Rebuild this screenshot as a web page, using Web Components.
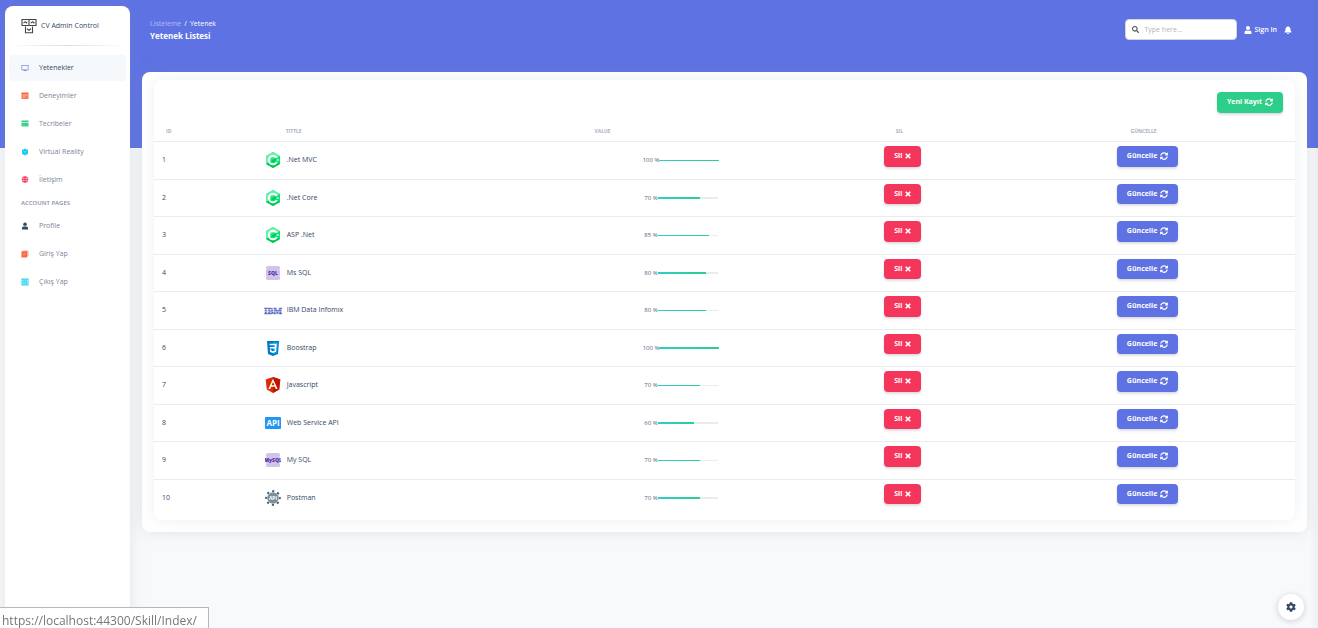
<!DOCTYPE html>
<html lang="tr">
<head>
<meta charset="utf-8">
<meta name="viewport" content="width=device-width, initial-scale=1">
<title>CV Admin Control</title>
<style>
  body { margin: 0; background: #f8f9fa; color: #525f7f; font: 7px/10px "Open Sans", "Noto Sans", sans-serif; }
</style>
</head>
<body>
<cv-shell>
  <cv-sidebar slot="sidebar">
    <cv-nav-item icon="screen" active>Yetenekler</cv-nav-item>
    <cv-nav-item icon="calendar">Deneyimler</cv-nav-item>
    <cv-nav-item icon="card">Tecribeler</cv-nav-item>
    <cv-nav-item icon="cube">Virtual Reality</cv-nav-item>
    <cv-nav-item icon="globe">İletişim</cv-nav-item>
    <cv-nav-item slot="account" icon="person">Profile</cv-nav-item>
    <cv-nav-item slot="account" icon="copy">Giriş Yap</cv-nav-item>
    <cv-nav-item slot="account" icon="collection">Çıkış Yap</cv-nav-item>
  </cv-sidebar>
  <cv-navbar slot="navbar"></cv-navbar>
  <cv-card><cv-skill-table></cv-skill-table></cv-card>
</cv-shell>
<cv-settings></cv-settings>
<cv-status>https://localhost:44300/Skill/Index/</cv-status>

<script>
const csharp = `<svg viewBox="0 0 16 16"><path d="M8 0l7 4v8l-7 4-7-4V4z" fill="#00e676"/><path d="M1 4l7-4 7 4-7 4-7 4z" fill="#69f0ae"/><path d="M1 12l3-1.500 4 2 4-2 3 1.500-7 4z" fill="#00c853"/><circle cx="8" cy="8" r="4.200" fill="none" stroke="#fff" stroke-width="1.900"/><path d="M8 8l7-3.500v6L9 9.500z" fill="#00e676"/><circle cx="8" cy="8" r="2.200" fill="#2fdc80"/><path d="M6 9l5-3 1 1.500L8 10.200z" fill="#00c853"/><path d="M11.500 7h2.500v2h-2.500z" fill="#8af5b8"/></svg>`;
const dbIcon = label => `<svg viewBox="0 0 16 16"><path d="M1 2.500Q1 1 3 1h10q2 0 2 1.500V4l-1 .5 1 .5v6l-1 .5 1 .5v1.500q0 1.500-2 1.500H3q-2 0-2-1.500V12l1-.5-1-.5V5l1-.5L1 4z" fill="#d1c4e9"/><text x="8" y="10" font-size="5" font-weight="800" text-anchor="middle" fill="#512da8">${label}</text></svg>`;

const ICONS = {
  logo: `<svg viewBox="0 0 16 16" fill="none" stroke="#444" stroke-width="1.100"><path d="M1 1.500h7v6H1zM8 1.500h7v6H8zM4.500 8.500v6.200h7V8.500"/><path d="M2.500 5.200l1.800-1.500L6.200 5.200M9.800 5.200l1.800-1.500 1.900 1.500M6 10.800l2 1.500 2-1.500" stroke-width="1.100"/></svg>`,
  screen: `<svg viewBox="0 0 16 16" fill="#5e72e4"><path d="M1 2h14v10.500h-4.500L11.500 14h-7l1-1.500H1zM2.500 3.500V11h11V3.500z" fill-rule="evenodd" opacity=".8"/></svg>`,
  calendar: `<svg viewBox="0 0 16 16"><path d="M1 1h14v3.500H1z" fill="#fb6340"/><path d="M1 4h14v10H1z" fill="#fb7a5c"/><path d="M3 6h10M3.500 10h5" stroke="#fdd" stroke-width="1.200"/></svg>`,
  card: `<svg viewBox="0 0 16 16"><path d="M1 1h14v3.500H1z" fill="#2dce89"/><path d="M1 6h14v7H1z" fill="#2dce89"/><path d="M1 4.500h14V6H1z" fill="#b4ecd3"/><path d="M3 10h5M10 10h3" stroke="#b4ecd3"/></svg>`,
  cube: `<svg viewBox="0 0 16 16"><path d="M8 1l6 3v7.500L8 15l-6-3.500V4z" fill="#11cdef"/><path d="M3 5l5 2.500L13 5M8 7.500V14" stroke="#6fe3f7" fill="none"/></svg>`,
  globe: `<svg viewBox="0 0 16 16"><circle cx="8" cy="7" r="6.500" fill="#f5365c"/><path d="M1.500 5h13M1.500 9h13" stroke="#fcc" fill="none" stroke-width="1.100"/><path d="M5 1.500Q3.500 7 5 12.500M11 1.500Q12.500 7 11 12.500" stroke="#fcc" fill="none" stroke-width=".8"/></svg>`,
  person: `<svg viewBox="0 0 16 16" fill="#344767"><circle cx="8" cy="4.500" r="3.500"/><path d="M2 15v-3q0-2.500 3-2.800h6q3 .3 3 2.800v3z"/></svg>`,
  copy: `<svg viewBox="0 0 16 16"><path d="M4 1h11v12H4z" fill="#fcb09f"/><path d="M1 2.500h11V15H1z" fill="#fb6340"/><path d="M4 6.500h5.500M4 9h5.500M4 11.500h3.500" stroke="#fba48f" stroke-width="1"/></svg>`,
  collection: `<svg viewBox="0 0 16 16"><path d="M1 1h14v14H1z" fill="#11cdef" opacity=".9"/><path d="M4 4h9v8H4z" fill="none" stroke="#d8f7fc" stroke-width="1.200"/><circle cx="8.500" cy="8" r="1.300" fill="#d8f7fc"/><path d="M0 5h2M0 11h2" stroke="#fff"/></svg>`,
  search: `<svg viewBox="0 0 512 512" fill="currentColor"><path d="M505 442.700L405.300 343c-4.500-4.500-10.600-7-17-7H372c27.600-35.300 44-79.700 44-128C416 93.100 322.900 0 208 0S0 93.100 0 208s93.100 208 208 208c48.300 0 92.700-16.400 128-44v16.300c0 6.400 2.500 12.500 7 17l99.700 99.700c9.400 9.400 24.600 9.400 33.900 0l28.300-28.300c9.400-9.400 9.400-24.600.1-34zM208 336c-70.700 0-128-57.200-128-128 0-70.700 57.200-128 128-128 70.700 0 128 57.200 128 128 0 70.700-57.200 128-128 128z"/></svg>`,
  user: `<svg viewBox="0 0 448 512" fill="currentColor"><path d="M224 256c70.700 0 128-57.300 128-128S294.700 0 224 0 96 57.300 96 128s57.300 128 128 128zm89.600 32h-16.700c-22.200 10.200-46.900 16-72.900 16s-50.600-5.800-72.900-16h-16.700C60.200 288 0 348.200 0 422.400V464c0 26.500 21.500 48 48 48h352c26.500 0 48-21.500 48-48v-41.600c0-74.200-60.200-134.400-134.400-134.400z"/></svg>`,
  bell: `<svg viewBox="0 0 448 512" fill="currentColor"><path d="M224 512c35.300 0 64-28.700 64-64H160c0 35.300 28.700 64 64 64zm215.400-149.700c-19.300-20.800-55.500-52-55.500-154.300 0-77.700-54.500-139.900-127.900-155.200V32c0-17.700-14.300-32-32-32s-32 14.300-32 32v20.800C118.600 68.100 64.100 130.300 64.100 208c0 102.300-36.200 133.500-55.500 154.300-6 6.400-8.700 14.200-8.600 21.700.1 16.400 13 32 32.100 32h383.800c19.100 0 32-15.600 32.100-32 .1-7.500-2.600-15.300-8.600-21.700z"/></svg>`,
  sync: `<svg viewBox="0 0 512 512" fill="currentColor"><path d="M370.720 133.280C339.458 104.008 298.888 87.962 255.848 88c-77.458.068-144.328 53.178-162.791 126.850-1.344 5.363-6.122 9.150-11.651 9.150H24.103c-7.498 0-13.194-6.807-11.807-14.176C33.933 94.924 134.813 8 256 8c66.448 0 126.791 26.136 171.315 68.685L463.030 40.970C478.149 25.851 504 36.559 504 57.941V192c0 13.255-10.745 24-24 24H345.941c-21.382 0-32.090-25.851-16.971-40.971l41.750-41.749zM32 296h134.059c21.382 0 32.090 25.851 16.971 40.971l-41.750 41.750c31.262 29.273 71.835 45.319 114.876 45.280 77.418-.07 144.315-53.144 162.787-126.849 1.344-5.363 6.122-9.150 11.651-9.150h57.304c7.498 0 13.194 6.807 11.807 14.176C478.067 417.076 377.187 504 256 504c-66.448 0-126.791-26.136-171.315-68.685L48.970 471.030C33.851 486.149 8 475.441 8 454.059V320c0-13.255 10.745-24 24-24z"/></svg>`,
  times: `<svg viewBox="0 0 16 16"><path d="M2 2l12 12M14 2L2 14" stroke="currentColor" stroke-width="4.500"/></svg>`,
  cog: `<svg viewBox="0 0 512 512" fill="#344767"><path d="M487.400 315.700l-42.600-24.600c4.300-23.200 4.300-47 0-70.200l42.600-24.600c4.900-2.800 7.100-8.600 5.500-14-11.100-35.600-30-67.800-54.700-94.600-3.800-4.100-10-5.100-14.800-2.300L380.800 110c-17.900-15.400-38.500-27.300-60.800-35.100V25.800c0-5.600-3.900-10.500-9.400-11.700-36.700-8.200-74.300-7.800-109.200 0-5.500 1.200-9.400 6.100-9.400 11.700V75c-22.200 7.900-42.800 19.800-60.800 35.100L88.700 85.500c-4.900-2.800-11-1.900-14.800 2.300-24.700 26.700-43.600 58.900-54.700 94.600-1.700 5.400.6 11.200 5.500 14L67.300 221c-4.300 23.200-4.300 47 0 70.200l-42.600 24.600c-4.900 2.800-7.100 8.600-5.500 14 11.100 35.600 30 67.800 54.700 94.600 3.800 4.100 10 5.100 14.800 2.300l42.600-24.600c17.900 15.400 38.500 27.300 60.800 35.100v49.200c0 5.600 3.900 10.500 9.400 11.700 36.700 8.200 74.300 7.800 109.200 0 5.500-1.200 9.400-6.100 9.400-11.700v-49.200c22.200-7.900 42.800-19.800 60.800-35.100l42.600 24.600c4.900 2.800 11 1.900 14.800-2.300 24.700-26.700 43.600-58.900 54.700-94.600 1.500-5.500-.7-11.300-5.600-14.100zM256 336c-44.100 0-80-35.900-80-80s35.900-80 80-80 80 35.900 80 80-35.900 80-80 80z"/></svg>`,
  csharp,
  sql: dbIcon("SQL"),
  mysql: dbIcon("MySQL"),
  ibm: `<svg viewBox="0 0 16 16" overflow="visible"><text x="8" y="12" font-family="Liberation Serif" font-size="9" font-weight="700" text-anchor="middle" fill="#5c6bc0" stroke="#5c6bc0" stroke-width=".5">IBM</text><path d="M-2 7.500h20M-2 9.500h20" stroke="#fff" stroke-width=".4"/></svg>`,
  css: `<svg viewBox="0 0 16 16"><path d="M2 1h12l-1 13-5 2-5-2z" fill="#0277bd"/><path d="M8 2h5l-.9 11L8 14.800z" fill="#039be5"/><path d="M4.500 3.800h7.300l-.7 8L8 13l-3-1.100-.2-2.400h1.600l.1 1.200 1.500.6 1.600-.6.200-2.200H4.800V7h4.900l.2-1.700H4.700z" fill="#fff"/></svg>`,
  angular: `<svg viewBox="0 0 16 16"><path d="M8 0l7.300 2.600-1.100 10L8 16l-6.200-3.400-1.100-10z" fill="#dd2c00"/><path d="M8 0l7.300 2.600-1.100 10L8 16z" fill="#bf1600"/><path d="M8 1.800L3.400 12h1.800l.9-2.300h3.800l.9 2.300h1.800zm0 3.300l1.400 3.200H6.600z" fill="#fff"/></svg>`,
  api: `<svg viewBox="0 0 16 16"><rect y="2" width="16" height="12" rx="1" fill="#2196f3"/><text x="8" y="11" font-size="8" font-weight="700" text-anchor="middle" fill="#fff">API</text></svg>`,
  gear: `<svg viewBox="0 0 16 16"><circle cx="8" cy="8" r="6.900" fill="none" stroke="#455a64" stroke-width="1.800" stroke-dasharray="2.200 3.219" stroke-dashoffset="1.100"/><circle cx="8" cy="8" r="5.800" fill="#78909c"/><text x="8" y="10" font-size="5" font-weight="700" text-anchor="middle" fill="#fff">API</text></svg>`
};

function define(name, markup, setup) {
  const template = document.createElement("template");
  template.innerHTML = markup;
  customElements.define(name, class extends HTMLElement {
    constructor() {
      super();
      this.attachShadow({ mode: "open" }).append(template.content.cloneNode(true));
    }
    connectedCallback() { if (setup) setup(this, this.shadowRoot); }
  });
}

define("cv-icon", `
  <style>
    :host { display: block; flex: none; width: var(--icon-size, 8px); height: var(--icon-size, 8px); }
    div { height: 100%; }
    svg { display: block; width: 100%; height: 100%; }
  </style><div></div>`,
  (host, root) => {
    root.querySelector("div").innerHTML = ICONS[host.getAttribute("name")] || "";
  });

define("cv-shell", `
  <style>
    :host { display: flex; min-height: 100vh; box-sizing: border-box; padding: 6px 11px 0 5px; gap: 12px;
      background: linear-gradient(270deg, rgba(60,70,90,.06), transparent 8px), linear-gradient(#5e72e4, #5e72e4) 0 0 / 100% 148px no-repeat;
      overflow: hidden; }
    aside { display: flex; flex: none; width: 125px; }
    main { flex: 1; min-width: 0; }
  </style>
  <aside><slot name="sidebar"></slot></aside>
  <main><slot name="navbar"></slot><slot></slot></main>`);

define("cv-sidebar", `
  <style>
    :host { display: block; flex: 1; box-sizing: border-box; padding: 0 4px; background: #fff; border-radius: 8px 8px 0 0;
      box-shadow: 0 0 16px rgba(136,152,170,.2); }
    .brand { display: flex; align-items: center; gap: 4px; height: 39px; padding-left: 12px; color: #344767; text-decoration: none; }
    .brand cv-icon { --icon-size: 16px; }
    hr { height: 1px; margin: 0 0 9px; border: 0; background: linear-gradient(90deg, transparent, #ddd, transparent); }
    nav { display: grid; gap: 2px; }
    h6 { margin: 5px 0 5px 12px; font-size: 6px; line-height: 10px; font-weight: 600; color: #8590a5; }
  </style>
  <a class="brand" href="#"><cv-icon name="logo"></cv-icon><span>CV Admin Control</span></a>
  <hr>
  <nav><slot></slot></nav>
  <h6>ACCOUNT PAGES</h6>
  <nav><slot name="account"></slot></nav>`);

define("cv-nav-item", `
  <style>
    :host { display: block; }
    a { display: flex; align-items: center; gap: 10px; height: 26px; padding-left: 12px; border-radius: 4px;
      color: #7b8499; text-decoration: none; }
    :host([active]) a { background: #f6f9fc; color: #344767; }
  </style>
  <a href="#"><slot></slot></a>`,
  (host, root) => {
    const icon = document.createElement("cv-icon");
    icon.setAttribute("name", host.getAttribute("icon"));
    root.querySelector("a").prepend(icon);
  });

define("cv-navbar", `
  <style>
    :host { display: flex; justify-content: space-between; align-items: flex-start; height: 66px; padding: 0 15px 0 8px;
      box-sizing: border-box; color: #fff; }
    a { color: inherit; text-decoration: none; }
    .trail { padding-top: 13px; }
    ol { display: flex; gap: 3px; margin: 0; padding: 0; list-style: none; }
    li:first-child { opacity: .5; }
    h1 { margin: 1px 0 0; font-size: 8px; line-height: 11px; font-weight: 700; }
    .tools { display: flex; align-items: center; gap: 7px; padding-top: 13px; }
    .sign { display: flex; align-items: center; gap: 2px; font-weight: 600; }
    .tools a cv-icon { --icon-size: 8px; }
  </style>
  <div class="trail">
    <ol><li><a href="#">Listeleme</a></li><li>/</li><li>Yetenek</li></ol>
    <h1>Yetenek Listesi</h1>
  </div>
  <div class="tools">
    <cv-search></cv-search>
    <a class="sign" href="#"><cv-icon name="user"></cv-icon><span>Sign In</span></a>
    <a href="#" aria-label="Notifications"><cv-icon name="bell"></cv-icon></a>
  </div>`);

define("cv-search", `
  <style>
    :host { display: block; }
    label { display: flex; align-items: center; gap: 5px; box-sizing: border-box; width: 112px; height: 21px; padding: 0 6px;
      background: #fff; border: 1px solid #d2d6da; border-radius: 4px; color: #495057; --icon-size: 7px; }
    input { flex: 1; min-width: 0; padding: 0; border: 0; outline: 0; background: none; font: inherit; color: inherit; }
    input::placeholder { color: #adb5bd; }
  </style>
  <label><cv-icon name="search"></cv-icon><input type="text" placeholder="Type here..." aria-label="Search"></label>`);

define("cv-card", `
  <style>
    :host { display: block; padding: 8px 12px 12px; background: #fff; border-radius: 8px;
      box-shadow: 0 0 16px rgba(136,152,170,.2); }
    section { border-radius: 8px; background: #fff; box-shadow: 0 0 16px rgba(136,152,170,.15); }
  </style>
  <section><slot></slot></section>`);

define("cv-button", `
  <style>
    :host { display: inline-block; vertical-align: top; }
    button { display: flex; align-items: flex-start; gap: 3px; box-sizing: border-box; height: var(--button-height, 21px);
      padding: 5px 10px 0; border: 0; border-radius: 4px; background: #5e72e4; color: #fff;
      font: 700 7px/10px "Open Sans", "Noto Sans", sans-serif; white-space: nowrap;
      box-shadow: 0 2px 3px rgba(50,50,93,.11), 0 1px 2px rgba(0,0,0,.08); cursor: pointer; }
    :host([tone="danger"]) button { background: #f5365c; }
    :host([tone="success"]) button { background: #2dce89; }
    .icon { display: flex; align-items: center; height: 10px; }
  </style>
  <button type="button"><slot></slot><span class="icon"><slot name="icon"></slot></span></button>`);

const SKILLS = [
  [".Net MVC", "csharp", 100], [".Net Core", "csharp", 70], ["ASP .Net", "csharp", 85], ["Ms SQL", "sql", 80],
  ["IBM Data Infomıx", "ibm", 80], ["Boostrap", "css", 100], ["Javascript", "angular", 70],
  ["Web Service API", "api", 60], ["My SQL", "mysql", 70], ["Postman", "gear", 70]
];

define("cv-skill-table", `
  <style>
    :host { display: block; padding-bottom: 3px; }
    .top { display: flex; justify-content: flex-end; padding: 12px 12px 8px; }
    table { width: 100%; border-collapse: separate; border-spacing: 0; table-layout: fixed; }
    th, td { box-sizing: border-box; padding: 0; border-bottom: 1px solid #e9ecef; text-align: left; vertical-align: top; }
    th { height: 21px; padding: 6px 0 0; font-size: 5px; line-height: 8px; font-weight: 700; color: #a9b1c2; }
    th:nth-child(1) { width: 9%; padding-left: 12px; }
    th:nth-child(2) { width: 29%; padding-left: 29px; }
    th:nth-child(3) { width: 17%; padding-left: 7px; }
    th:nth-child(4) { width: 21%; padding-right: 4px; text-align: center; }
    th:nth-child(5) { width: 24%; padding-right: 29px; text-align: center; }
    tbody tr { height: 38px; }
    tbody tr:nth-child(even) { height: 37px; --button-height: 20px; --bar: 2px; }
    tbody tr:last-child td { border: 0; }
    td:nth-child(1) { padding: 13px 0 0 8px; color: #344767; }
    td:nth-child(4), td:nth-child(5) { padding: 4px 0 0 3px; text-align: center; }
    td:nth-child(5) { padding: 4px 29px 0 8px; }
    .name { display: flex; align-items: center; gap: 6px; padding: 10px 0 0 8px; --icon-size: 16px; color: #344767; }
    .level { display: flex; align-items: center; justify-content: center; padding: 13px 7px 0 0; font-size: 6px; }
    .level div { width: 60px; height: var(--bar, 1px); background: #e9ecef; }
    .level i { display: block; height: 100%; background: linear-gradient(90deg, #2dcecc, #2dce89); }
    cv-button[tone="danger"] { --icon-size: 6px; }
  </style>
  <div class="top"><cv-button tone="success">Yeni Kayıt<cv-icon slot="icon" name="sync"></cv-icon></cv-button></div>
  <table>
    <thead><tr><th>ID</th><th>TITTLE</th><th>VALUE</th><th>SIL</th><th>GÜNCELLE</th></tr></thead>
    <tbody></tbody>
  </table>`,
  (host, root) => {
    root.querySelector("tbody").innerHTML = SKILLS.map(([name, icon, value], i) => `<tr>
      <td>${i + 1}</td>
      <td><div class="name"><cv-icon name="${icon}"></cv-icon><span>${name}</span></div></td>
      <td><div class="level"><span>${value} %</span><div role="progressbar" aria-valuenow="${value}"><i style="width:${value}%"></i></div></div></td>
      <td><cv-button tone="danger">Sil<cv-icon slot="icon" name="times"></cv-icon></cv-button></td>
      <td><cv-button>Güncelle<cv-icon slot="icon" name="sync"></cv-icon></cv-button></td>
    </tr>`).join("");
  });

define("cv-settings", `
  <style>
    :host { position: fixed; right: 14px; bottom: 8px; }
    button { display: grid; place-items: center; width: 26px; height: 26px; padding: 0; border: 0; border-radius: 50%; background: #fff;
      box-shadow: 0 1px 6px rgba(0,0,0,.18); --icon-size: 10px; }
  </style>
  <button type="button" aria-label="Settings"><cv-icon name="cog"></cv-icon></button>`);

define("cv-status", `
  <style>
    :host { position: fixed; left: 0; bottom: 0; box-sizing: border-box; width: 209px; padding: 6px 0 0 2px;
      border: solid #b8b8b8; border-width: 1px 1px 0 0; background: rgba(255,255,255,.85); color: #777;
      font-size: 12px; line-height: 14px; white-space: nowrap; }
  </style><slot></slot>`);
</script>
</body>
</html>
